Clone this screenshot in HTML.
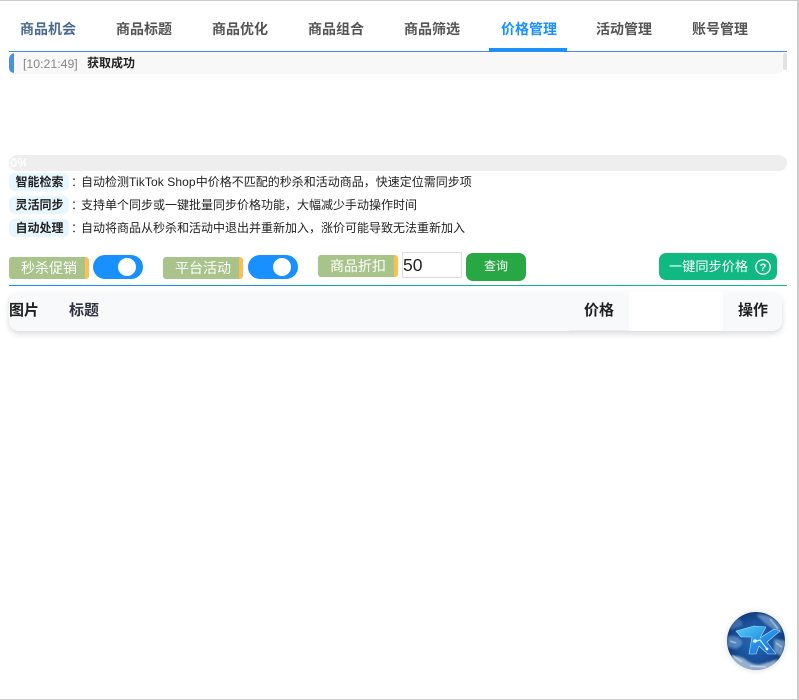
<!DOCTYPE html>
<html lang="zh"><head><meta charset="utf-8"><title>价格管理</title>
<style>
html,body{margin:0;padding:0;background:#fff}
body{width:799px;height:700px;position:relative;overflow:hidden;font-family:"Liberation Sans","Noto Sans CJK SC",sans-serif;color:#222}
.a{position:absolute;white-space:nowrap}
.tab{top:19px;height:20px;line-height:20px;font-size:14px;font-weight:700;color:#555}
.tag{left:9px;height:18px;line-height:18px;width:60px;text-align:center;background:#e6f7ff;border-radius:6px;font-size:12px;font-weight:700;color:#222;padding-left:1px;box-sizing:border-box}
.col{left:71px;height:18px;line-height:18px;font-size:12px;color:#444}
.desc{left:81px;height:18px;line-height:18px;font-size:12px;color:#222}
.lb{height:22px;line-height:22px;background:#a9c48b;border-right:4px solid #fdc04f;border-radius:3px;color:#fff;font-size:14px;text-align:center;box-sizing:border-box;padding-left:4px}
.sw{top:255px;width:50px;height:24px;border-radius:12px;background:#1890ff}
.sw i{position:absolute;right:7px;top:3px;width:18px;height:18px;border-radius:50%;background:#fff}
.th{font-size:15px;font-weight:700;color:#222;line-height:20px}
</style></head><body>
<div class="a" style="left:0;top:0;width:799px;height:1px;background:#ccc"></div>
<div class="a" style="left:797px;top:0;width:2px;height:700px;background:#ccc"></div>
<div class="a" style="left:0;top:699px;width:799px;height:1px;background:#ccc"></div>

<div class="a tab" style="left:20px;color:#4a6a8f">商品机会</div>
<div class="a tab" style="left:116px">商品标题</div>
<div class="a tab" style="left:212px">商品优化</div>
<div class="a tab" style="left:308px">商品组合</div>
<div class="a tab" style="left:404px">商品筛选</div>
<div class="a tab" style="left:501px;color:#1890ff">价格管理</div>
<div class="a tab" style="left:596px">活动管理</div>
<div class="a tab" style="left:692px">账号管理</div>
<div class="a" style="left:9px;top:51px;width:778px;height:1px;background:#3a8ee6"></div>
<div class="a" style="left:489px;top:48px;width:78px;height:3px;background:#1890ff"></div>

<div class="a" style="left:9px;top:53px;width:774px;height:21px;background:#f8f8f8;border-radius:6px;overflow:hidden"><div style="width:5px;height:20px;background:#4a90e2;border-radius:5px 0 0 5px"></div></div>
<div class="a" style="left:783px;top:53px;width:4px;height:17px;background:#e2e2e2;border-radius:2px"></div>
<div class="a" style="left:23px;top:56px;font-size:12.3px;line-height:17px;color:#888">[10:21:49]</div>
<div class="a" style="left:87px;top:55px;font-size:12px;line-height:17px;font-weight:700;color:#222">获取成功</div>

<div class="a" style="left:9px;top:155px;width:778px;height:16px;background:#eee;border-radius:8px"></div>
<div class="a" style="left:10px;top:155px;width:16px;height:16px;overflow:hidden;font-size:13px;line-height:15px;font-weight:700;color:#fff">0%</div>

<div class="a tag" style="top:173px">智能检索</div><div class="a col" style="top:173px">：</div><div class="a desc" style="top:173px">自动检测<span style="letter-spacing:.1px">TikTok Shop</span>中价格不匹配的秒杀和活动商品，快速定位需同步项</div>
<div class="a tag" style="top:196px">灵活同步</div><div class="a col" style="top:196px">：</div><div class="a desc" style="top:196px">支持单个同步或一键批量同步价格功能，大幅减少手动操作时间</div>
<div class="a tag" style="top:219px">自动处理</div><div class="a col" style="top:219px">：</div><div class="a desc" style="top:219px">自动将商品从秒杀和活动中退出并重新加入，涨价可能导致无法重新加入</div>

<div class="a lb" style="left:9px;top:257px;width:80px">秒杀促销</div>
<div class="a sw" style="left:93px"><i></i></div>
<div class="a lb" style="left:163px;top:257px;width:80px">平台活动</div>
<div class="a sw" style="left:248px"><i></i></div>
<div class="a lb" style="left:318px;top:255px;width:80px">商品折扣</div>
<div class="a" style="left:402px;top:252px;width:60px;height:26px;box-sizing:border-box;border:1px solid #ddd;font-size:17.5px;line-height:24px;color:#222;padding-left:0">50</div>
<div class="a" style="left:466px;top:253px;width:60px;height:28px;background:#28a745;border-radius:7px;color:#fff;font-size:12px;line-height:27px;text-align:center">查询</div>
<div class="a" style="left:659px;top:253px;width:118px;height:27px;background:#10b981;border-radius:7px"></div>
<div class="a" style="left:669px;top:253px;font-size:13.2px;line-height:27px;color:#fff">一键同步价格</div>
<svg class="a" style="left:754px;top:258px" width="18" height="18" viewBox="0 0 18 18"><circle cx="9" cy="9" r="7.2" fill="none" stroke="#fff" stroke-width="1.3"/><text x="9" y="13" text-anchor="middle" font-size="11" font-weight="700" fill="#fff" font-family="Liberation Sans">?</text></svg>

<div class="a" style="left:9px;top:285px;width:778px;height:1px;background:linear-gradient(90deg,#1890ff,#10b981)"></div>

<div class="a" style="left:9px;top:292px;width:773px;height:39px;background:#fff;border-radius:10px;box-shadow:0 3px 6px rgba(60,60,80,.18)"></div>
<div class="a" style="left:9px;top:292px;width:560px;height:39px;background:#f8f9fb;border-radius:10px 0 0 10px"></div>
<div class="a" style="left:569px;top:292px;width:60px;height:38px;background:#f8f9fb;border-bottom:1px solid #eee"></div>
<div class="a" style="left:723px;top:292px;width:59px;height:39px;background:#f8f9fb;border-radius:0 10px 10px 0"></div>
<div class="a th" style="left:9px;top:301px">图片</div>
<div class="a th" style="left:69px;top:301px;color:#2d3340">标题</div>
<div class="a th" style="left:584px;top:301px">价格</div>
<div class="a th" style="left:738px;top:301px">操作</div>

<svg class="a" style="left:722px;top:607px" width="70" height="70" viewBox="0 0 70 70">
<defs>
<radialGradient id="g" cx=".5" cy=".5" r=".55"><stop offset="0" stop-color="#2a6cb8"/><stop offset=".65" stop-color="#184f98"/><stop offset="1" stop-color="#0f3570"/></radialGradient>
<linearGradient id="k" x1="0" y1="0" x2="1" y2="1"><stop offset="0" stop-color="#4fd0f7"/><stop offset=".55" stop-color="#2a8fe6"/><stop offset="1" stop-color="#1a5fc4"/></linearGradient>
<filter id="b" x="-20%" y="-20%" width="140%" height="140%"><feGaussianBlur stdDeviation="1"/></filter>
<filter id="b2"><feGaussianBlur stdDeviation=".5"/></filter>
<filter id="s" x="-30%" y="-30%" width="160%" height="160%"><feGaussianBlur stdDeviation="3"/></filter>
<clipPath id="c"><circle cx="34" cy="34" r="29"/></clipPath>
</defs>
<circle cx="34" cy="34" r="30" fill="#000" opacity=".1" filter="url(#s)"/>
<circle cx="34" cy="34" r="29" fill="url(#g)"/>
<g clip-path="url(#c)">
<path d="M8 50Q16 47 24 53T40 57T56 52L50 64H16Z" fill="#dcecf9" opacity=".65" filter="url(#b)"/>
<path d="M5 30Q12 27 18 32T14 42L5 40Z" fill="#8db9e3" opacity=".5" filter="url(#b)"/>
<path d="M12 10Q22 12 20 19L8 23Z" fill="#7aaadb" opacity=".4" filter="url(#b)"/>
<path d="M34 8Q48 5 58 18L60 26Q50 22 44 17Z" fill="#a5c9ea" opacity=".5" filter="url(#b)"/>
<path d="M52 32L64 34L60 50L52 45Z" fill="#b8d8f0" opacity=".5" filter="url(#b)"/>
<path d="M10 48L20 55M28 59L44 60M48 12L56 22M54 36L60 40M8 34L14 36" stroke="#f2f9ff" stroke-width="1" opacity=".8" filter="url(#b2)"/>
<path d="M14 24L32 19L44 20L38 31L52 22L58 24L45 35L54 47L46 47L37 39L34 47L27 47L30 30L19 30Z" fill="url(#k)" stroke="#a8e2f8" stroke-width=".6" stroke-linejoin="round"/>
<path d="M31 35L38 33L45 42" fill="none" stroke="#c5f2ff" stroke-width="1.2"/>
<circle cx="33" cy="34" r="1.7" fill="#e5fbff"/><circle cx="45" cy="42" r="1.4" fill="#e5fbff"/>
</g>
</svg>
</body></html>
